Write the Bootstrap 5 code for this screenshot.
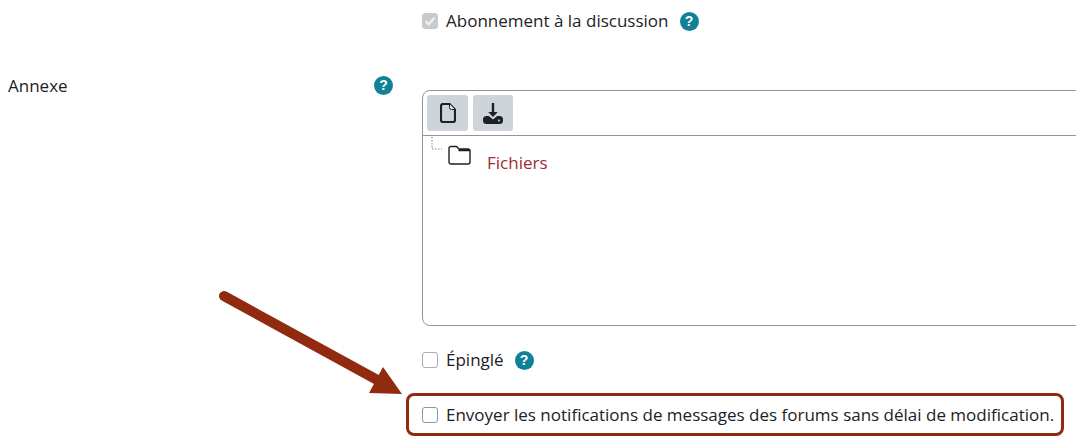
<!DOCTYPE html>
<html lang="fr">
<head>
<meta charset="utf-8">
<title>Annexe</title>
<link href="https://cdn.jsdelivr.net/npm/bootstrap@5.3.0/dist/css/bootstrap.min.css" rel="stylesheet">
<style>
html, body { height: 443px; overflow: hidden; }
body { font-family: "Open Sans", "Noto Sans", sans-serif; font-size: 17px; color: #1d2125; background: #fff; position: relative; }
.page-wrap { width: 1076px; padding-top: 9px; }
.line-txt { line-height: 24px; }
.left-col { width: 422px; flex: none; padding-left: 8px; padding-right: 29px; }
.right-col { width: 700px; flex: none; }
.chk { width: 16px; height: 16px; border: 1px solid #8f959e; border-radius: 3px; background: #fff; flex: none; display: block; }
.chk-soft { border-color: #a9adb3; }
.chk-off { background: #c8cace; border-color: #c8cace; display: flex; align-items: center; justify-content: center; }
.help-dot { width: 19px; height: 19px; border-radius: 50%; background: #0f8297; color: #fff; font-family: "Liberation Sans", sans-serif; font-weight: 700; font-size: 14px; line-height: 19px; text-align: center; flex: none; margin-top: 2px; }
.help-after { margin-left: 3px; margin-top: 0; }
.fm-box { height: 236px; border: 1px solid #8f959e; border-radius: 8px; margin-top: 16px; }
.fm-bar { height: 45px; border-bottom: 1px solid #8f959e; padding: 4px; gap: 5px; }
.fm-btn { height: 36px; width: 41px; background: #ced4da; border-radius: 3px; display: flex; align-items: center; justify-content: center; }
.fm-btn-b { width: 40px; }
.fm-tree { padding: 1px 0 0 8px; gap: 6px; }
.fm-name { color: #a02b33; margin-left: 10px; margin-top: 14px; line-height: 24px; }
.hl-box { width: 658px; height: 43px; margin-left: -16px; border: 3px solid #912a0f; border-radius: 8px; padding-left: 13px; }
.gap-a { height: 41px; }
.row-b { margin-top: 22px; }
.row-c { margin-top: 21px; }
.arrow-layer { position: absolute; left: 0; top: 0; pointer-events: none; }
</style>
</head>
<body>
<div class="page-wrap">
  <div class="d-flex">
    <div class="left-col"></div>
    <div class="right-col d-flex align-items-center gap-2 line-txt">
      <span class="chk chk-off"><svg width="14" height="14" viewBox="0 0 14 14"><path d="M2.5 7.2 5.6 10.2 11.5 3.800" fill="none" stroke="#f2f3f4" stroke-width="2"/></svg></span>
      <span>Abonnement à la discussion</span>
      <span class="help-dot help-after">?</span>
    </div>
  </div>
  <div class="gap-a"></div>
  <div class="d-flex">
    <div class="left-col d-flex justify-content-between align-items-start line-txt">
      <span>Annexe</span>
      <span class="help-dot">?</span>
    </div>
    <div class="right-col">
      <div class="fm-box">
        <div class="fm-bar d-flex">
          <div class="fm-btn">
            <svg width="16" height="20" viewBox="0 0 16 20"><path d="M3 1h6.500L15 6.500V17a2 2 0 0 1-2 2H3a2 2 0 0 1-2-2V3a2 2 0 0 1 2-2z" fill="none" stroke="#1d2125" stroke-width="2.200" stroke-linejoin="round"/><path d="M9.500 1v3.500a2 2 0 0 0 2 2H15" fill="#e4e7ea" stroke="#1d2125" stroke-width="1"/></svg>
          </div>
          <div class="fm-btn fm-btn-b">
            <svg width="20" height="21" viewBox="0 0 20 21"><path d="M8.800 0h2.400v9h3.600L10 14 5.200 9h3.600z" fill="#1d2125"/><path d="M3.500 13h2.300L10 16.500 14.200 13h2.300a3.500 3.500 0 0 1 3.500 3.500v1A3.500 3.500 0 0 1 16.500 21h-13A3.500 3.500 0 0 1 0 17.500v-1A3.500 3.500 0 0 1 3.500 13z" fill="#1d2125"/><circle cx="16" cy="17.500" r="1" fill="#ced4da"/></svg>
          </div>
        </div>
        <div class="fm-tree d-flex align-items-start">
          <svg width="11" height="13" viewBox="0 0 11 13"><path d="M1 0v12H11" fill="none" stroke="#a9adb3" stroke-width="1.500" stroke-dasharray="1.500 1.500"/></svg>
          <svg width="23" height="20" class="mt-2" viewBox="0 0 23 20"><path d="M3 1.500h5.500L11 4h9a2 2 0 0 1 2 2v11a2 2 0 0 1-2 2H3a2 2 0 0 1-2-2V3.500a2 2 0 0 1 2-2zM10.500 5.500H22" fill="#fff" stroke="#1d2125" stroke-width="1.400"/></svg>
          <span class="fm-name">Fichiers</span>
        </div>
      </div>
      <div class="d-flex align-items-center gap-2 line-txt row-b">
        <span class="chk chk-soft"></span>
        <span>Épinglé</span>
        <span class="help-dot help-after">?</span>
      </div>
      <div class="hl-box d-flex align-items-center gap-2 line-txt row-c">
        <span class="chk"></span>
        <span class="text-nowrap">Envoyer les notifications de messages des forums sans délai de modification.</span>
      </div>
    </div>
  </div>
</div>
<svg class="arrow-layer" width="1076" height="443" viewBox="0 0 1076 443">
  <path d="M224 296 381 382" stroke="#912a0f" stroke-width="10" stroke-linecap="round" fill="none"/>
  <path d="M383 367 402 394 369 393z" fill="#912a0f"/>
</svg>
</body>
</html>
